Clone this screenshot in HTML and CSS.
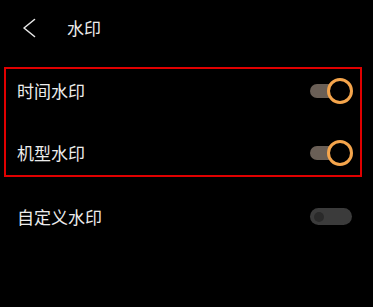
FILE: index.html
```html
<!DOCTYPE html>
<html lang="zh">
<head>
<meta charset="utf-8">
<link rel="stylesheet" href="styles.css">
</head>
<body>
<div class="page">
  <header class="header">
    <svg class="back" width="14" height="20" viewBox="0 0 14 20">
      <polyline points="12.5,1.5 2,10 12.5,18.5" fill="none" stroke="#e6e6e6" stroke-width="1.6" stroke-linecap="round" stroke-linejoin="round"/>
    </svg>
    <div class="title">水印</div>
  </header>
  <div class="group">
    <div class="row">
      <span class="label">时间水印</span>
      <span class="toggle on"><span class="track"></span><span class="knob"></span></span>
    </div>
    <div class="row">
      <span class="label">机型水印</span>
      <span class="toggle on"><span class="track"></span><span class="knob"></span></span>
    </div>
  </div>
  <div class="row single">
    <span class="label">自定义水印</span>
    <span class="toggle off"><span class="track"></span><span class="knob"></span></span>
  </div>
</div>
</body>
</html>
```
FILE: styles.css
```css
html, body {
  margin: 0;
  padding: 0;
  background: #000;
}
body {
  width: 373px;
  height: 307px;
  overflow: hidden;
  font-family: "Noto Sans CJK SC", "Noto Sans", sans-serif;
  color: #ececec;
}
.header {
  height: 55px;
  display: flex;
  align-items: center;
  padding-left: 22px;
}
.back {
  display: block;
}
.title {
  margin-left: 31px;
  font-size: 17px;
  line-height: 20px;
}
.group {
  margin: 12px 11px 0 4px;
  border: 2px solid #e00000;
  padding: 0 7px 0 11px;
  display: flex;
  flex-direction: column;
  gap: 18px;
}
.row {
  height: 44px;
  display: flex;
  align-items: center;
  justify-content: space-between;
}
.row.single {
  margin-top: 18px;
  padding: 0 20px 0 17px;
}
.label {
  font-size: 17px;
  line-height: 20px;
}
.toggle {
  position: relative;
  width: 43px;
  height: 26px;
  display: block;
}
.toggle.on .track {
  position: absolute;
  left: 0;
  top: 6px;
  width: 30px;
  height: 14px;
  border-radius: 7px;
  background: #6a5f56;
}
.toggle.on .knob {
  position: absolute;
  right: 0;
  top: 0;
  width: 20px;
  height: 20px;
  border-radius: 50%;
  border: 3px solid #f5a54c;
  background: #000;
}
.toggle.off .track {
  position: absolute;
  left: 0;
  top: 4px;
  width: 42px;
  height: 17px;
  border-radius: 9px;
  background: #3b3b3b;
}
.toggle.off .knob {
  position: absolute;
  left: 4px;
  top: 8px;
  width: 10px;
  height: 10px;
  border-radius: 50%;
  background: #2a2a2a;
}
```
